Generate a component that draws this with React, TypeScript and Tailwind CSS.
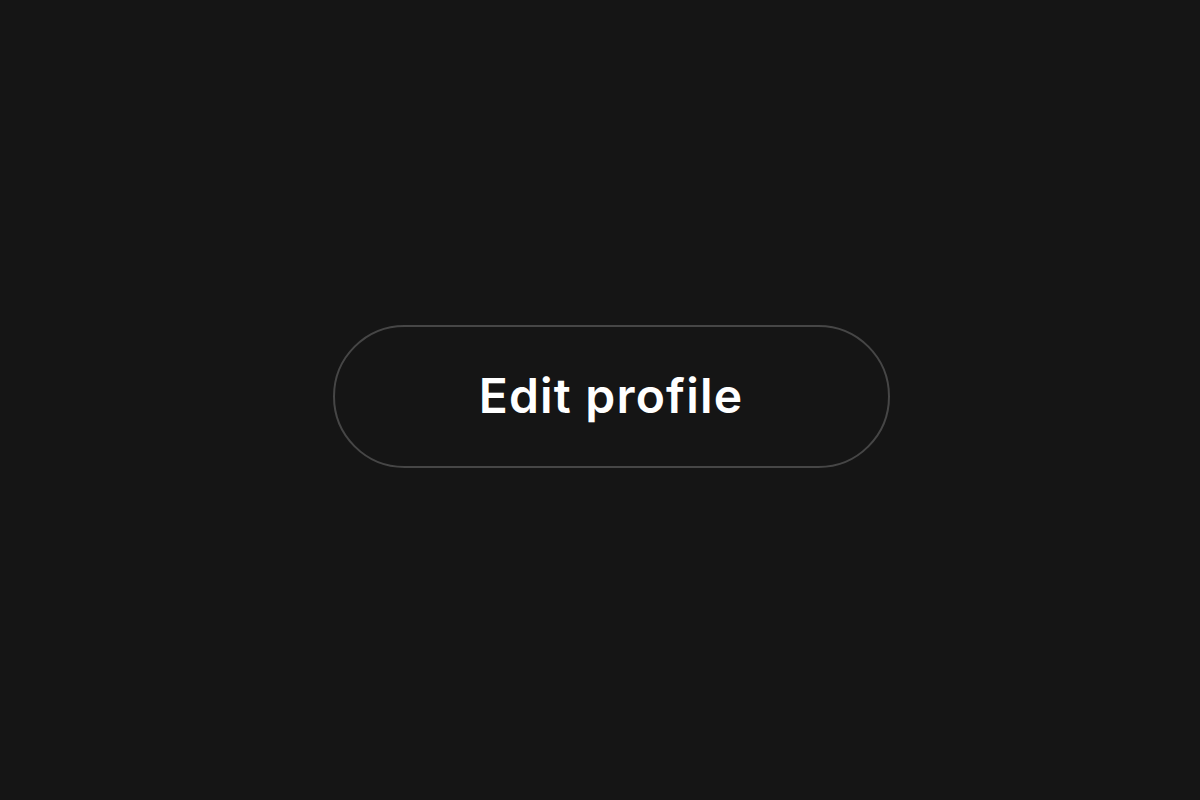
export default function App() {
  return (
    <div className="flex h-screen w-full items-center justify-center bg-[#151515] pl-[22px] pb-[8px]">
      <button
        type="button"
        className="flex h-[143px] w-[557px] items-center justify-center rounded-full border-2 border-[#464646] bg-[#151515] text-[48px] font-semibold tracking-[1.2px] text-white"
        style={{ fontFamily: 'Inter, "Noto Sans", sans-serif' }}
      >
        Edit profile
      </button>
    </div>
  );
}
